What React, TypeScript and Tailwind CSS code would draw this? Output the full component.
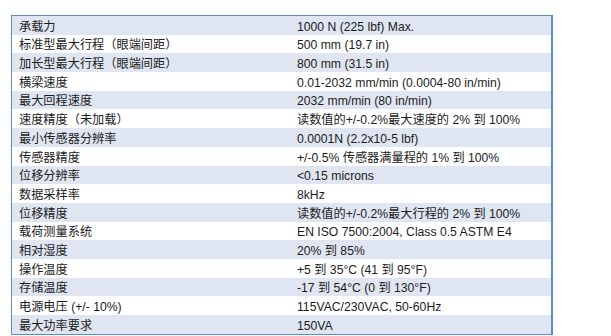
const specs: [string, string][] = [
  ["承载力", "1000 N (225 lbf) Max."],
  ["标准型最大行程（眼端间距）", "500 mm (19.7 in)"],
  ["加长型最大行程（眼端间距）", "800 mm (31.5 in)"],
  ["横梁速度", "0.01-2032 mm/min (0.0004-80 in/min)"],
  ["最大回程速度", "2032 mm/min (80 in/min)"],
  ["速度精度（未加载）", "读数值的+/-0.2%最大速度的 2% 到 100%"],
  ["最小传感器分辨率", "0.0001N (2.2x10-5 lbf)"],
  ["传感器精度", "+/-0.5% 传感器满量程的 1% 到 100%"],
  ["位移分辨率", "<0.15 microns"],
  ["数据采样率", "8kHz"],
  ["位移精度", "读数值的+/-0.2%最大行程的 2% 到 100%"],
  ["载荷测量系统", "EN ISO 7500:2004, Class 0.5 ASTM E4"],
  ["相对湿度", "20% 到 85%"],
  ["操作温度", "+5 到 35°C (41 到 95°F)"],
  ["存储温度", "-17 到 54°C (0 到 130°F)"],
  ["电源电压 (+/- 10%)", "115VAC/230VAC, 50-60Hz"],
  ["最大功率要求", "150VA"],
];

export default function App() {
  return (
    <div className="h-[336px] w-[611px] bg-white pl-[11px] pt-[15px] font-['Liberation_Sans','Noto_Sans_CJK_SC',sans-serif] text-[12.2px] leading-[13px] text-[#1c1c1c]">
      <div className="w-[542px] border border-r-2 border-[#5a8dd0]">
        {specs.map(([label, value], i) => (
          <div
            key={label}
            className={`flex h-[18.7px] items-end pb-[1px] ${i % 2 === 0 ? "bg-[#dfe5f1]" : "bg-white"}`}
          >
            <div className="w-[285px] shrink-0 pl-[7px]">{label}</div>
            <div className="whitespace-nowrap">{value}</div>
          </div>
        ))}
      </div>
    </div>
  );
}
